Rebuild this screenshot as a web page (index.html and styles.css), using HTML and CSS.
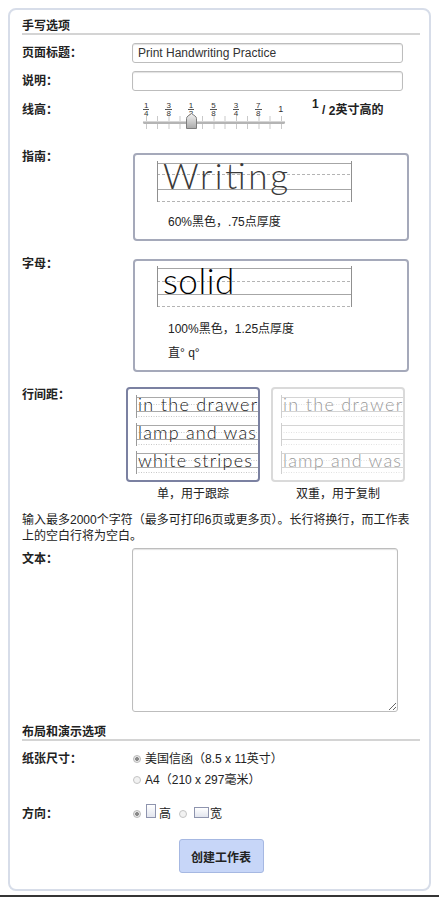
FILE: index.html
```html
<!DOCTYPE html>
<html lang="zh-CN">
<head>
<meta charset="utf-8">
<title>手写选项</title>
<link rel="stylesheet" href="styles.css">
</head>
<body>
<form class="panel">
  <h2 class="sec">手写选项</h2>

  <div class="row r-title">
    <label class="lbl">页面标题<span class="p">：</span></label>
    <div><input class="txt" type="text" value="Print Handwriting Practice"></div>
  </div>

  <div class="row r-desc">
    <label class="lbl">说明<span class="p">：</span></label>
    <div><input class="txt" type="text" value=""></div>
  </div>

  <div class="row r-height">
    <label class="lbl">线高<span class="p">：</span></label>
    <div class="hwrap">
      <div class="slider">
        <div class="fracs">
          <span class="frac"><span class="n">1</span><span class="d">4</span></span>
          <span class="frac"><span class="n">3</span><span class="d">8</span></span>
          <span class="frac"><span class="n">1</span><span class="d">2</span></span>
          <span class="frac"><span class="n">5</span><span class="d">8</span></span>
          <span class="frac"><span class="n">3</span><span class="d">4</span></span>
          <span class="frac"><span class="n">7</span><span class="d">8</span></span>
          <span class="frac whole">1</span>
        </div>
        <svg class="track" width="160" height="16" viewBox="0 0 160 16">
          <defs>
            <linearGradient id="thumbg" x1="0" y1="0" x2="0" y2="1">
              <stop offset="0" stop-color="#f4f4f4"/>
              <stop offset="1" stop-color="#a9a9a9"/>
            </linearGradient>
          </defs>
          <g stroke="#c9c9c9" stroke-width="1">
            <line x1="14.5" y1="1" x2="14.5" y2="14"/>
            <line x1="25.5" y1="1" x2="25.5" y2="14"/>
            <line x1="37" y1="1" x2="37" y2="14"/>
            <line x1="48" y1="1" x2="48" y2="14"/>
            <line x1="59.5" y1="1" x2="59.5" y2="14"/>
            <line x1="70.5" y1="1" x2="70.5" y2="14"/>
            <line x1="82" y1="1" x2="82" y2="14"/>
            <line x1="93" y1="1" x2="93" y2="14"/>
            <line x1="104.5" y1="1" x2="104.5" y2="14"/>
            <line x1="115.5" y1="1" x2="115.5" y2="14"/>
            <line x1="127" y1="1" x2="127" y2="14"/>
            <line x1="138" y1="1" x2="138" y2="14"/>
            <line x1="149.5" y1="1" x2="149.5" y2="14"/>
          </g>
          <rect x="11" y="6" width="142" height="3" rx="1.5" fill="#b4b4b4"/>
          <rect x="11" y="6" width="142" height="1" fill="#d6d6d6"/>
          <path d="M54.5 13.5 V3.5 Q54.5 2 56 1 L59.5 -1.5 L63 1 Q64.5 2 64.5 3.5 V13.5 Z" fill="url(#thumbg)" stroke="#7d7d7d" stroke-width="1"/>
        </svg>
      </div>
      <div class="hval"><span class="sup">1</span> / <span class="sub">2</span>英寸高的</div>
    </div>
  </div>

  <div class="row r-guide">
    <label class="lbl">指南<span class="p">：</span></label>
    <div class="sample guide">
      <svg class="lines" width="272" height="50" viewBox="0 0 272 50">
        <line x1="22" y1="8.5" x2="217" y2="8.5" stroke="#a6a6a6"/>
        <line x1="22" y1="19.5" x2="217" y2="19.5" stroke="#b4b4b4" stroke-dasharray="3 2"/>
        <line x1="22" y1="34.5" x2="217" y2="34.5" stroke="#a6a6a6"/>
        <line x1="22" y1="46.5" x2="217" y2="46.5" stroke="#b4b4b4" stroke-dasharray="3 2"/>
        <line x1="22.5" y1="6" x2="22.5" y2="47" stroke="#909090"/>
        <line x1="216.5" y1="6" x2="216.5" y2="47" stroke="#909090"/>
        <text x="28" y="34" class="hw hw-thin" textLength="125" lengthAdjust="spacing">Writing</text>
      </svg>
      <div class="cap1">60%黑色<span class="p">，</span>.75点厚度</div>
    </div>
  </div>

  <div class="row r-letter">
    <label class="lbl">字母<span class="p">：</span></label>
    <div class="sample letter">
      <svg class="lines" width="272" height="50" viewBox="0 0 272 50">
        <line x1="22" y1="7.5" x2="217" y2="7.5" stroke="#a6a6a6"/>
        <line x1="22" y1="20.5" x2="217" y2="20.5" stroke="#b4b4b4" stroke-dasharray="3 2"/>
        <line x1="22" y1="33.5" x2="217" y2="33.5" stroke="#a6a6a6"/>
        <line x1="22" y1="45.5" x2="217" y2="45.5" stroke="#b4b4b4" stroke-dasharray="3 2"/>
        <line x1="22.5" y1="5" x2="22.5" y2="46" stroke="#909090"/>
        <line x1="216.5" y1="5" x2="216.5" y2="46" stroke="#909090"/>
        <text x="28" y="33" class="hw hw-solid">solid</text>
      </svg>
      <div class="cap2">100%黑色<span class="p">，</span>1.25点厚度</div>
      <div class="cap2">直° q°</div>
    </div>
  </div>

  <div class="row r-spacing">
    <label class="lbl">行间距<span class="p">：</span></label>
    <div class="spacing">
      <figure class="sp">
        <div class="sp-box sel">
          <svg width="130" height="91" viewBox="0 0 130 91">
            <g class="gl">
              <line x1="8" y1="8.5" x2="130" y2="8.5" class="ln"/>
              <line x1="8" y1="15.5" x2="130" y2="15.5" class="dt"/>
              <line x1="8" y1="22.5" x2="130" y2="22.5" class="ln"/>
              <line x1="8" y1="27.5" x2="130" y2="27.5" class="dt"/>
              <line x1="8.5" y1="6" x2="8.5" y2="29" class="vl"/>
              <line x1="8" y1="36.5" x2="130" y2="36.5" class="ln"/>
              <line x1="8" y1="43.5" x2="130" y2="43.5" class="dt"/>
              <line x1="8" y1="50.5" x2="130" y2="50.5" class="ln"/>
              <line x1="8" y1="55.5" x2="130" y2="55.5" class="dt"/>
              <line x1="8.5" y1="34" x2="8.5" y2="57" class="vl"/>
              <line x1="8" y1="64.5" x2="130" y2="64.5" class="ln"/>
              <line x1="8" y1="71.5" x2="130" y2="71.5" class="dt"/>
              <line x1="8" y1="78.5" x2="130" y2="78.5" class="ln"/>
              <line x1="8" y1="83.5" x2="130" y2="83.5" class="dt"/>
              <line x1="8.5" y1="62" x2="8.5" y2="85" class="vl"/>
            </g>
            <text x="10" y="22" class="sptx" textLength="119" lengthAdjust="spacing">in the drawer</text>
            <text x="10" y="50" class="sptx" textLength="118" lengthAdjust="spacing">lamp and was</text>
            <text x="10" y="78" class="sptx" textLength="114" lengthAdjust="spacing">white stripes</text>
          </svg>
        </div>
        <figcaption class="cap">单<span class="p">，</span>用于跟踪</figcaption>
      </figure>
      <figure class="sp">
        <div class="sp-box dbl">
          <svg width="130" height="91" viewBox="0 0 130 91">
            <g class="gl">
              <line x1="8" y1="8.5" x2="130" y2="8.5" class="ln"/>
              <line x1="8" y1="15.5" x2="130" y2="15.5" class="dt"/>
              <line x1="8" y1="22.5" x2="130" y2="22.5" class="ln"/>
              <line x1="8" y1="27.5" x2="130" y2="27.5" class="dt"/>
              <line x1="8.5" y1="6" x2="8.5" y2="29" class="vl"/>
              <line x1="8" y1="36.5" x2="130" y2="36.5" class="ln"/>
              <line x1="8" y1="43.5" x2="130" y2="43.5" class="dt"/>
              <line x1="8" y1="50.5" x2="130" y2="50.5" class="ln"/>
              <line x1="8" y1="55.5" x2="130" y2="55.5" class="dt"/>
              <line x1="8.5" y1="34" x2="8.5" y2="57" class="vl"/>
              <line x1="8" y1="64.5" x2="130" y2="64.5" class="ln"/>
              <line x1="8" y1="71.5" x2="130" y2="71.5" class="dt"/>
              <line x1="8" y1="78.5" x2="130" y2="78.5" class="ln"/>
              <line x1="8" y1="83.5" x2="130" y2="83.5" class="dt"/>
              <line x1="8.5" y1="62" x2="8.5" y2="85" class="vl"/>
            </g>
            <text x="10" y="22" class="sptx" textLength="119" lengthAdjust="spacing">in the drawer</text>
            <text x="10" y="78" class="sptx" textLength="118" lengthAdjust="spacing">lamp and was</text>
          </svg>
        </div>
        <figcaption class="cap">双重<span class="p">，</span>用于复制</figcaption>
      </figure>
    </div>
  </div>

  <p class="note">输入最多2000个字符<span class="p">（</span>最多可打印6页或更多页<span class="p">）。</span>长行将换行<span class="p">，</span>而工作表<br>上的空白行将为空白<span class="p">。</span></p>

  <div class="row r-text">
    <label class="lbl">文本<span class="p">：</span></label>
    <div><textarea class="area"></textarea></div>
  </div>

  <h2 class="sec sec2">布局和演示选项</h2>

  <div class="row r-paper">
    <label class="lbl">纸张尺寸<span class="p">：</span></label>
    <div>
      <label class="opt"><input type="radio" name="paper" checked>美国信函<span class="p">（</span>8.5 x 11英寸<span class="p">）</span></label>
      <label class="opt"><input type="radio" name="paper">A4<span class="p">（</span>210 x 297毫米<span class="p">）</span></label>
    </div>
  </div>

  <div class="row r-orient">
    <label class="lbl">方向<span class="p">：</span></label>
    <div class="orient">
      <input type="radio" name="orient" checked><span class="pg portrait"></span><span class="ot">高</span><input type="radio" name="orient" class="r2"><span class="pg landscape"></span><span class="ot2">宽</span>
    </div>
  </div>

  <div class="actions"><button type="button" class="btn">创建工作表</button></div>
</form>
<div class="bottombar"></div>
</body>
</html>
```

FILE: styles.css
```css
* { box-sizing: border-box; }
html, body { margin: 0; padding: 0; background: #fff; }
body {
  font-family: "Liberation Sans", "Noto Sans CJK SC", sans-serif;
  font-size: 12px;
  color: #222;
}
.p {
  font-family: "Noto Sans CJK TC", "Noto Sans CJK SC", sans-serif;
  line-height: 0;
}

.panel {
  display: block;
  margin: 8px 8px 0;
  height: 883px;
  border: 2px solid #d7dde9;
  border-radius: 8px;
  padding: 10px 9px 16px 12px;
}

.bottombar {
  margin-top: 4px;
  height: 2px;
  background: #353535;
}

.sec {
  margin: 0;
  font-size: 12px;
  font-weight: bold;
  line-height: 13px;
  border-bottom: 2px solid #d4d4d4;
}
.sec2 { margin-top: 14px; }

.row {
  display: grid;
  grid-template-columns: 110px 1fr;
}
.lbl {
  font-weight: bold;
  line-height: 14px;
}

.r-title { margin-top: 8px; align-items: center; }
.r-desc { margin-top: 8px; align-items: center; }

.txt {
  display: block;
  width: 271px;
  height: 20px;
  margin: 0;
  padding: 0 5px;
  border: 1px solid #bdbdbd;
  border-radius: 3px;
  box-shadow: inset 0 1px 1px #e2e2e2;
  font-family: "Liberation Sans", sans-serif;
  font-size: 12px;
  color: #333;
  background: #fff;
}

/* line height slider */
.r-height { margin-top: 9px; height: 33px; }
.r-height .lbl { padding-top: 3px; }
.hwrap { display: flex; align-items: flex-start; }
.slider { width: 160px; }
.fracs {
  display: flex;
  padding-left: 3px;
  padding-top: 2px;
  height: 17px;
}
.frac {
  width: 22.5px;
  display: flex;
  flex-direction: column;
  align-items: center;
  font-family: "Liberation Sans", sans-serif;
  font-size: 8px;
  line-height: 7px;
  color: #333;
}
.frac .n {
  padding: 0 1px;
  border-bottom: 1px solid #555;
}
.frac .d { padding-top: 0; }
.frac.whole { font-size: 9px; line-height: 15px; padding-top: 0; }
.track { display: block; margin-top: -2px; overflow: visible; }

.hval {
  margin-left: 20px;
  padding-top: 3px;
  font-weight: bold;
  line-height: 14px;
  white-space: nowrap;
}
.hval .sup { position: relative; top: -6px; }
.hval .sub { position: relative; top: 1px; }

/* samples */
.r-guide { margin-top: 17px; }
.r-letter { margin-top: 16px; }
.sample {
  margin-left: 1px;
  width: 276px;
  border: 2px solid #a5a9ba;
  border-radius: 4px;
  background: #fff;
}
.guide { margin-top: 3px; height: 88px; }
.letter { margin-top: 2px; height: 113px; }
.lines { display: block; }
.hw { font-family: "Lato", "Open Sans", sans-serif; font-size: 35px; }
.hw-thin { font-weight: 300; fill: #3a3a3a; }
.hw-solid { font-weight: 300; fill: #000; letter-spacing: 0.5px; }
.cap1 { margin-top: 10px; padding-left: 33px; line-height: 14px; }
.letter .lines { margin-bottom: 6px; }
.cap2 { padding-left: 33px; line-height: 24px; }

/* spacing */
.r-spacing { margin-top: 15px; }
.r-spacing .lbl { padding-top: 1px; }
.spacing { display: flex; gap: 11px; margin-left: -6px; }
.sp { margin: 0; width: 134px; text-align: center; }
.sp-box {
  height: 95px;
  border: 2px solid #7b81a1;
  border-radius: 4px;
  overflow: hidden;
  background: #fff;
}
.sp-box svg { display: block; }
.sp-box.dbl { border-color: #dadada; }
.gl .ln { stroke: #a9a9a9; stroke-width: 1; }
.gl .dt { stroke: #c8c8c8; stroke-width: 1; stroke-dasharray: 1 1.5; }
.gl .vl { stroke: #9a9a9a; stroke-width: 1; }
.sptx {
  font-family: "Lato", "Open Sans", sans-serif;
  font-size: 18px;
  font-weight: 300;
  fill: #222;
}
.dbl .gl .ln { stroke: #d4d4d4; }
.dbl .gl .dt { stroke: #e2e2e2; }
.dbl .gl .vl { stroke: #cfcfcf; }
.dbl .sptx { fill: #9a9a9a; }
.cap { margin-top: 5px; line-height: 14px; }

.note {
  margin: 11px 0 0;
  line-height: 16px;
  white-space: nowrap;
}

.r-text { margin-top: 4px; }
.r-text .lbl { padding-top: 4px; }
.area {
  display: block;
  width: 266px;
  height: 164px;
  margin: 0;
  border: 1px solid #bdbdbd;
  border-radius: 3px;
  box-shadow: inset 0 1px 1px #e2e2e2;
  font-family: "Liberation Sans", sans-serif;
  font-size: 12px;
}

.r-paper { margin-top: 8px; }
.r-paper .lbl, .r-orient .lbl { line-height: 21px; }
.opt { display: block; line-height: 21px; white-space: nowrap; }

input[type="radio"] {
  -webkit-appearance: none;
  appearance: none;
  width: 8px;
  height: 8px;
  margin: 0 4px 0 1px;
  border: 1px solid #c4c4c4;
  border-radius: 50%;
  background: #f2f2f2;
  vertical-align: middle;
  position: relative;
  top: -1px;
}
input[type="radio"]:checked {
  background: radial-gradient(circle, #8a8a8a 0 1.6px, #e9e9e9 2.2px);
  border-color: #b9b9b9;
}

.r-orient { margin-top: 13px; }
.orient { line-height: 21px; white-space: nowrap; }
.pg {
  display: inline-block;
  border: 1px solid #8e94ae;
  background: linear-gradient(#ffffff, #e2e5ee);
}
.portrait { width: 10px; height: 14px; margin-left: 1px; }
.landscape { width: 15px; height: 11px; margin-left: 3px; }
.ot { margin-left: 3px; margin-right: 7px; }
.ot2 { margin-left: 1px; }

.actions { margin-top: 14px; display: flex; justify-content: center; }
.btn {
  width: 85px;
  height: 34px;
  margin: 0;
  border: 1px solid #a6b8e2;
  border-radius: 3px;
  background: #c7d6f8;
  font-family: "Liberation Sans", "Noto Sans CJK SC", sans-serif;
  font-size: 12px;
  font-weight: bold;
  color: #222;
}
```
